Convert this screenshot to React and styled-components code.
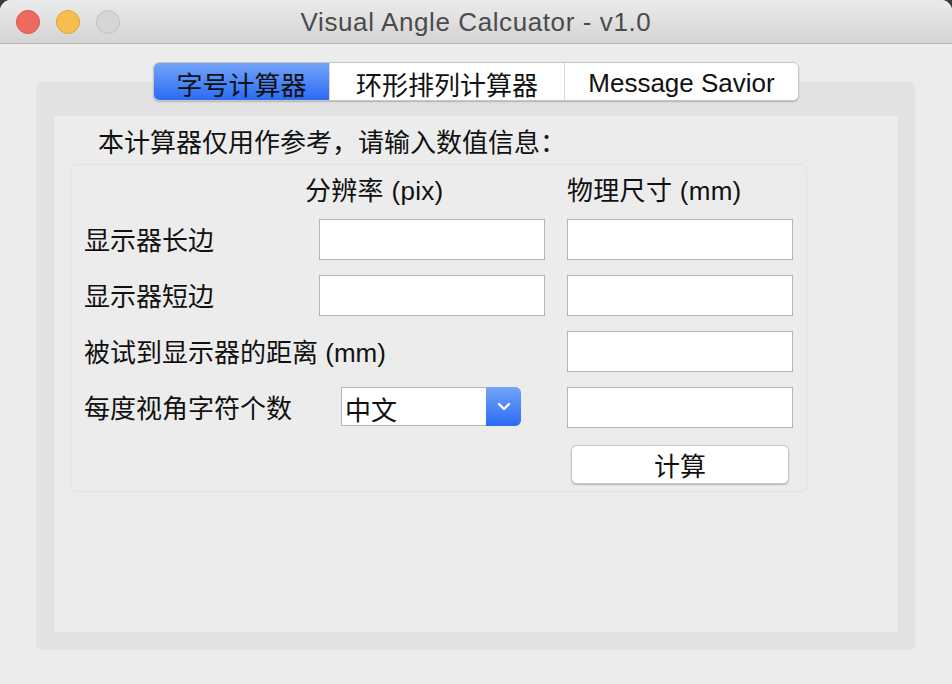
import React from "react";
import styled, { createGlobalStyle } from "styled-components";

const Global = createGlobalStyle`
  html, body { margin: 0; padding: 0; background: #3a3a3a; }
  body { font-family: "Liberation Sans", "Noto Sans CJK SC", sans-serif; }
  * { box-sizing: border-box; }
`;

const Window = styled.div`
  width: 952px;
  height: 684px;
  display: flex;
  flex-direction: column;
  border-radius: 11px 11px 0 0;
  overflow: hidden;
  background: #ececec;
`;

const TitleBar = styled.div`
  height: 44px;
  flex: none;
  display: flex;
  align-items: center;
  position: relative;
  padding-left: 16px;
  gap: 16px;
  background: linear-gradient(#ebebeb, #d4d4d4);
  border-bottom: 1px solid #b9b9b9;
`;

const Light = styled.span`
  width: 24px;
  height: 24px;
  border-radius: 50%;
  background: ${(p) => p.$fill};
  border: 1px solid ${(p) => p.$stroke};
`;

const Title = styled.div`
  position: absolute;
  left: 0;
  right: 0;
  top: 1px;
  bottom: 0;
  display: flex;
  align-items: center;
  justify-content: center;
  font-size: 26px;
  letter-spacing: 0.6px;
  color: #4b4b4b;
  pointer-events: none;
`;

const Body = styled.div`
  flex: 1;
  display: flex;
  flex-direction: column;
  padding: 18px 37px 34px 36px;
`;

const TabBar = styled.div`
  align-self: flex-start;
  margin-left: 117px;
  margin-bottom: -19px;
  position: relative;
  z-index: 1;
  display: flex;
  height: 39px;
  background: #fff;
  border: 1px solid #c6c6c6;
  border-radius: 6px;
  box-shadow: 0 1px 1.5px rgba(0, 0, 0, 0.22);
  overflow: hidden;
`;

const Tab = styled.div`
  width: ${(p) => p.$w}px;
  display: flex;
  align-items: center;
  justify-content: center;
  padding-top: 3px;
  font-size: 26px;
  color: #111;
  border-left: ${(p) => (p.$first ? "none" : "1px solid #d9d9d9")};
  background: ${(p) =>
    p.$active ? "linear-gradient(#74a4f7, #2a6bf4)" : "#fff"};
`;

const Frame = styled.div`
  flex: 1;
  display: flex;
  background: #e2e2e2;
  border-radius: 6px;
  padding: 34px 17px 18px 18px;
`;

const Pane = styled.div`
  flex: 1;
  background: #ececec;
  padding: 13px 16px;
`;

const Intro = styled.div`
  font-size: 26px;
  line-height: 28px;
  padding-left: 28px;
  color: #111;
`;

const Group = styled.div`
  margin-top: 7px;
  width: 737px;
  display: grid;
  grid-template-columns: 212px 226px 226px;
  grid-template-rows: 39px;
  grid-auto-rows: 41px;
  column-gap: 22px;
  row-gap: 15px;
  padding: 0 14px 7px 14px;
  border: 1px solid #e2e2e2;
  border-radius: 6px;
  background: #ececec;
`;

const Header = styled.div`
  grid-column: ${(p) => p.$col};
  align-self: end;
  font-size: 26px;
  line-height: 28px;
  color: #111;
  margin-left: ${(p) => p.$shift || 0}px;
  margin-bottom: -1px;
  letter-spacing: 0.3px;
`;

const Label = styled.div`
  grid-column: 1 / span ${(p) => p.$span || 1};
  align-self: center;
  font-size: 26px;
  line-height: 28px;
  color: #111;
  white-space: nowrap;
  margin-left: -1px;
  padding-top: 2px;
`;

const Input = styled.input`
  grid-column: ${(p) => p.$col};
  height: 41px;
  width: 226px;
  border: 1px solid #b4b4b4;
  background: #fff;
  outline: none;
  font-size: 22px;
  padding: 0 4px;
`;

const Select = styled.div`
  grid-column: 2;
  align-self: start;
  margin-left: 22px;
  width: 180px;
  height: 39px;
  display: flex;
  background: #fff;
  border: 1px solid #b7b7b7;
  border-right: none;
  border-radius: 0 6px 6px 0;
`;

const SelectText = styled.div`
  flex: 1;
  display: flex;
  align-items: center;
  padding: 3px 0 0 3px;
  font-size: 26px;
  color: #111;
`;

const SelectArrow = styled.div`
  width: 35px;
  margin: -1px 0;
  display: flex;
  align-items: center;
  justify-content: center;
  border-radius: 0 6px 6px 0;
  background: linear-gradient(#74a4f7, #2a6bf4);
`;

const Button = styled.button`
  grid-column: 3;
  align-self: end;
  margin: 0 4px;
  height: 39px;
  background: #fff;
  border: 1px solid #c8c8c8;
  border-radius: 6px;
  box-shadow: 0 1px 1.5px rgba(0, 0, 0, 0.25);
  font-family: inherit;
  font-size: 26px;
  color: #111;
  padding: 0;
`;

export default function App() {
  return (
    <>
      <Global />
      <Window>
        <TitleBar>
          <Light $fill="#ee6a5e" $stroke="#d4574c" />
          <Light $fill="#f6be4f" $stroke="#d9a33f" />
          <Light $fill="#d6d6d6" $stroke="#c3c3c3" />
          <Title>Visual Angle Calcuator - v1.0</Title>
        </TitleBar>
        <Body>
          <TabBar>
            <Tab $w={175} $first $active>字号计算器</Tab>
            <Tab $w={235}>环形排列计算器</Tab>
            <Tab $w={234}>Message Savior</Tab>
          </TabBar>
          <Frame>
            <Pane>
              <Intro>本计算器仅用作参考，请输入数值信息：</Intro>
              <Group>
                <Header $col={2} $shift={-14}>分辨率 (pix)</Header>
                <Header $col={3}>物理尺寸 (mm)</Header>

                <Label>显示器长边</Label>
                <Input $col={2} />
                <Input $col={3} />

                <Label>显示器短边</Label>
                <Input $col={2} />
                <Input $col={3} />

                <Label $span={2}>被试到显示器的距离 (mm)</Label>
                <Input $col={3} />

                <Label>每度视角字符个数</Label>
                <Select>
                  <SelectText>中文</SelectText>
                  <SelectArrow>
                    <svg width="14" height="9" viewBox="0 0 14 9">
                      <path
                        d="M2 2 L7 7 L12 2"
                        fill="none"
                        stroke="#fff"
                        strokeWidth="2.4"
                        strokeLinecap="round"
                        strokeLinejoin="round"
                      />
                    </svg>
                  </SelectArrow>
                </Select>
                <Input $col={3} />

                <Button>计算</Button>
              </Group>
            </Pane>
          </Frame>
        </Body>
      </Window>
    </>
  );
}
